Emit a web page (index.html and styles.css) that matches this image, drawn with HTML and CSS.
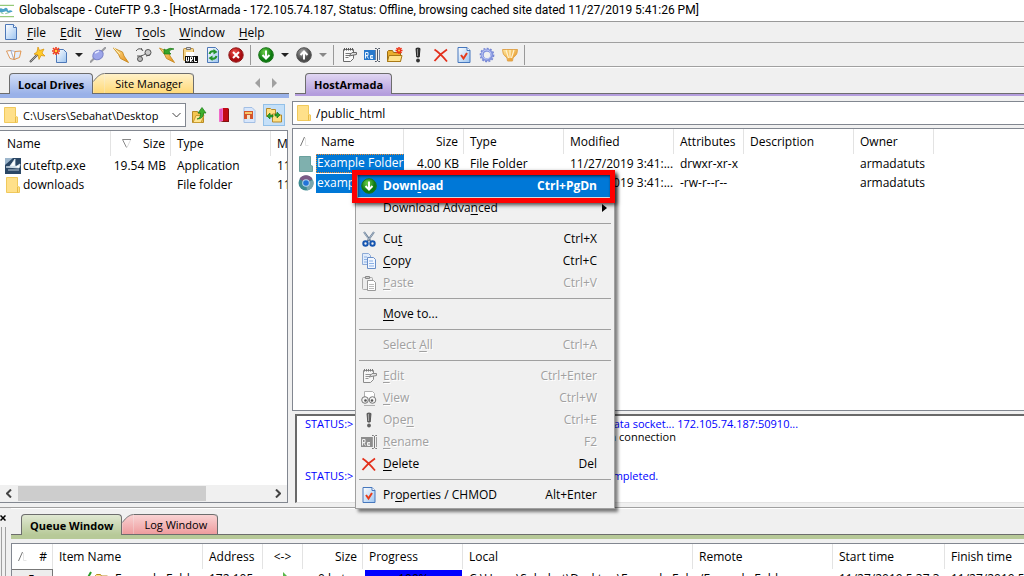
FILE: index.html
```html
<!DOCTYPE html>
<html lang="en">
<head>
<meta charset="utf-8">
<meta name="viewport" content="width=device-width, initial-scale=1">
<title>Globalscape - CuteFTP 9.3</title>
<link rel="stylesheet" href="styles.css">
</head>
<body>
<svg class="defs" width="0" height="0" aria-hidden="true">
  <defs>
    <linearGradient id="g-yellow" x1="0" y1="0" x2="0" y2="1"><stop offset="0" stop-color="#fff1c8"/><stop offset="1" stop-color="#ffd978"/></linearGradient>
    <linearGradient id="g-red" x1="0" y1="0" x2="0" y2="1"><stop offset="0" stop-color="#f9d3d3"/><stop offset="1" stop-color="#ee9c9e"/></linearGradient>
    <linearGradient id="g-page" x1="0" y1="0" x2="1" y2="1"><stop offset="0" stop-color="#ffffff"/><stop offset="1" stop-color="#9cc4f0"/></linearGradient>
    <radialGradient id="g-green" cx=".4" cy=".3"><stop offset="0" stop-color="#6fd04a"/><stop offset="1" stop-color="#0d7a10"/></radialGradient>
    <radialGradient id="g-grey" cx=".4" cy=".3"><stop offset="0" stop-color="#a8a8a8"/><stop offset="1" stop-color="#4c4c4c"/></radialGradient>
    <radialGradient id="g-stop" cx=".4" cy=".3"><stop offset="0" stop-color="#f0504a"/><stop offset="1" stop-color="#a80c10"/></radialGradient>
    <linearGradient id="g-gold" x1="0" y1="0" x2="1" y2="1"><stop offset="0" stop-color="#ffe9a0"/><stop offset="1" stop-color="#e58a12"/></linearGradient>
  </defs>
  <symbol id="i-app" viewBox="0 0 16 16"><path d="M0 1.500h16M0 14.500h16" stroke="#6bb544" stroke-width="1"/><path d="M0 5c3-1 3 2 5 0s4 0 4 2 2-1 5 1v1c-3 0-4 2-6 0s-4 2-8 0z" fill="#4ba3c7"/><path d="M1 10l3 1M6 11l4-1" stroke="#7cc08a"/></symbol>
  <symbol id="i-page" viewBox="0 0 16 16"><path d="M2.500.500h8l3 3v12h-11z" fill="url(#g-page)" stroke="#4d78b8"/><path d="M10.500.500v3h3" fill="#fff" stroke="#4d78b8"/></symbol>
  <symbol id="i-book" viewBox="0 0 16 16"><path d="M.500 4l4.500-.500 3 9-4-1z" fill="#f4f8ff" stroke="#d9904e" stroke-width=".900"/><path d="M5 3.500l4 1 1.500 7-2.500 1z" fill="#fff" stroke="#9ab0d8" stroke-width=".900"/><path d="M9 4.500l6-.500-1.500 6.500-5.500 2z" fill="#e4eefc" stroke="#e08b3b" stroke-width=".900"/></symbol>
  <symbol id="i-wand" viewBox="0 0 16 16"><path d="M1 15L9 7" stroke="#555" stroke-width="2.200"/><path d="M1.500 14.500L8 8" stroke="#bbb" stroke-width=".800"/><path d="M9 0l1.500 3.500L15 2l-2 4 3 3-4-.500-2 4-1-4.500-4-1 3-2z" fill="#ffca28" stroke="#d99006" stroke-width=".700"/></symbol>
  <symbol id="i-new" viewBox="0 0 16 16"><path d="M4.500 2.500h7l3 3v10h-10z" fill="url(#g-page)" stroke="#4d78b8"/><path d="M4 0v8M0 4h8M1 1l6 6M7 1L1 7" stroke="#ee3b1d" stroke-width="1.600"/><circle cx="4" cy="4" r="1.300" fill="#ffd23c"/></symbol>
  <symbol id="i-plug" viewBox="0 0 16 16"><path d="M0 15.500l5-5M11 5l5-5" stroke="#9a9b9f" stroke-width="2"/><ellipse cx="8" cy="8" rx="5.500" ry="4.500" transform="rotate(-35 8 8)" fill="#9da6ea" stroke="#7c84c8"/><path d="M5 6l4-2" stroke="#e6e9ff" stroke-width="1.500"/></symbol>
  <symbol id="i-bolt" viewBox="0 0 16 16"><path d="M.500 1l9 4 1.500 4 4.500 6.500-8-4-2-4z" fill="url(#g-gold)" stroke="#c78a20" stroke-width=".900"/><path d="M1 1l6 6" stroke="#fff0b0"/></symbol>
  <symbol id="i-unplug" viewBox="0 0 16 16"><path d="M0 4q3-4 6-1M5 9q6-2 5-5" fill="none" stroke="#555"/><circle cx="4" cy="12" r="2.500" fill="#bbb" stroke="#555"/><circle cx="12" cy="5.500" r="3" fill="#ccc" stroke="#555"/><path d="M1 9h5M10 9l4-1M5 1l2 3" stroke="#555"/></symbol>
  <symbol id="i-boltgreen" viewBox="0 0 16 16"><path d="M.500 1l9 4 1.500 4 4.500 6.500-8-4-2-4z" fill="url(#g-gold)" stroke="#c78a20" stroke-width=".900"/><path d="M5 7V2l2 1q4-3 8-1-4 0-5 3l2 2z" fill="#37a52a" stroke="#187a12" stroke-width=".700"/></symbol>
  <symbol id="i-url" viewBox="0 0 16 16"><rect x="1.500" y="1.500" width="10" height="12" rx="1" fill="#f5d488" stroke="#b88a36"/><path d="M4.500.500h4v2h-4z" fill="#ddd" stroke="#777"/><path d="M4 5h8v6H4z" fill="#fff"/><path d="M3 9h13v7H3z" fill="#111"/><path d="M4.500 10v4h2v-4M8.500 15v-5h2v2.500h-2l2 2.500M12.500 10v4.500H15" stroke="#fff" fill="none"/></symbol>
  <symbol id="i-refresh" viewBox="0 0 16 16"><path d="M2.500.500h8l3 3v12h-11z" fill="url(#g-page)" stroke="#4d78b8"/><path d="M4.500 7q1-3.500 5-2.500M11.500 9q-1 3.500-5 2.500" fill="none" stroke="#23942b" stroke-width="2"/><path d="M8.500 2l4 3-4 2.500zM7.500 14l-4-3 4-2.500z" fill="#23942b"/></symbol>
  <symbol id="i-stop" viewBox="0 0 16 16"><circle cx="8" cy="8" r="7.200" fill="url(#g-stop)" stroke="#8f1a1a"/><path d="M5 5l6 6M11 5l-6 6" stroke="#fff" stroke-width="2"/></symbol>
  <symbol id="i-down" viewBox="0 0 16 16"><circle cx="8" cy="8" r="7.300" fill="url(#g-green)" stroke="#1b741c"/><path d="M8 3.500v8M4.500 8L8 11.500 11.500 8" fill="none" stroke="#fff" stroke-width="2"/></symbol>
  <symbol id="i-up" viewBox="0 0 16 16"><circle cx="8" cy="8" r="7.300" fill="url(#g-grey)" stroke="#555"/><path d="M8 12.500v-8M4.500 8L8 4.500 11.500 8" fill="none" stroke="#fff" stroke-width="2"/></symbol>
  <symbol id="i-edit" viewBox="0 0 16 16"><path d="M2.500 2.500h10v9l-3 3h-7z" fill="#fafafa" stroke="#6a6a6a"/><path d="M3.500 1v2.500M5.500 1v2.500M7.500 1v2.500M9.500 1v2.500M11.500 1v2.500" stroke="#555"/><path d="M4.500 6.500h6M4.500 8.500h5M4.500 10.500h3" stroke="#777"/><path d="M8 9l3-3.500h4.500v2z" fill="#ddd" stroke="#666"/></symbol>
  <symbol id="i-rename" viewBox="0 0 16 16"><path d="M0 3h11v10H0z" fill="#2878cc"/><path d="M1.500 11.500v-6h2.500v3H1.500M2.500 8.500L4.500 11.500M9 8.500H6.500v3H9M6.500 10h2.500" fill="none" stroke="#e9f4ff"/><path d="M11 1.500h1.500l1 1 1-1H16M13.500 2v12M11 14.500h1.500l1-1 1 1H16" fill="none" stroke="#4e5663"/><path d="M11.500 3v10M15.500 3v10" stroke="#7382a0"/></symbol>
  <symbol id="i-newfolder" viewBox="0 0 16 16"><path d="M.500 14.500v-10l1-1h4l1 2h7v9z" fill="#e9ae2e" stroke="#9c6d11"/><path d="M.500 14.500l1.500-6h13l-1.500 6z" fill="#ffe28a" stroke="#a97917"/><path d="M12 0v7M8.500 3.500h7M9.500 1l5 5M14.500 1l-5 5" stroke="#ee3219" stroke-width="1.500"/><circle cx="12" cy="3.500" r="1" fill="#ffd23c"/></symbol>
  <symbol id="i-openfolder" viewBox="0 0 16 16"><path d="M1.500 13.500v-9l1-1h4l1 1.500h6v8.500z" fill="#ffe28a" stroke="#b98a22"/><path d="M1.500 13.500l3-6h10l-2 6z" fill="#fff0b5" stroke="#b98a22"/></symbol>
  <symbol id="i-bang" viewBox="0 0 16 16"><path d="M6 1.500q2-1 4 0L9.200 10H6.800z" fill="#333" stroke="#222"/><path d="M7.500 2v7" stroke="#8b8b8b"/><circle cx="8" cy="13.500" r="1.900" fill="#333"/></symbol>
  <symbol id="i-x" viewBox="0 0 16 16"><path d="M1.500 2.500q6 4 12.500 12M14 2.500Q7 7 1.500 14" fill="none" stroke="#e3301c" stroke-width="1.800"/></symbol>
  <symbol id="i-props" viewBox="0 0 16 16"><path d="M2 .500h9l3 3v12H2z" fill="url(#g-page)" stroke="#4677bd"/><path d="M11 .500v3h3" fill="#fff" stroke="#4677bd"/><path d="M5 8l2.500 3.500L11 6" fill="none" stroke="#e63c1c" stroke-width="2"/></symbol>
  <symbol id="i-gear" viewBox="0 0 16 16"><circle cx="8" cy="8" r="4.700" fill="none" stroke="#8595de" stroke-width="3"/><circle cx="8" cy="8" r="6.600" fill="none" stroke="#7687d4" stroke-width="1.500" stroke-dasharray="2 1.400"/><circle cx="7.500" cy="7.500" r="4.500" fill="none" stroke="#c0caf7"/></symbol>
  <symbol id="i-shell" viewBox="0 0 16 16"><path d="M.500 2.500h15q.500 5-4.500 8.500L10.500 14h-5L5 11Q0 7.500.500 2.500z" fill="url(#g-gold)" stroke="#e0a550"/><path d="M4 3l2.500 8M8 3v8M12 3l-2.500 8" stroke="#fff3d0" stroke-width="1.200"/></symbol>
  <symbol id="i-folder" viewBox="0 0 16 16"><path d="M1.500.500h11v9l2 .500v5.500h-13z" fill="#ffe08a" stroke="#f0c95c"/><path d="M12.500 10v5.500" stroke="#e8bb46"/></symbol>
  <symbol id="i-upfolder" viewBox="0 0 16 16"><path d="M1.500 15.500v-11h5l1 2h5v9z" fill="#f4c550" stroke="#b58a25"/><path d="M2 15.500l3-7h8l-3 7z" fill="#ffe592" stroke="#c99b2f"/><path d="M6 12q4-1 3.500-6H7l4-5.500L15 6h-2.500q0 6-6.500 6z" fill="#3eb02f" stroke="#187c17" stroke-width=".700"/></symbol>
  <symbol id="i-bookred" viewBox="0 0 16 16"><path d="M3 2l4-1v13l-4 1z" fill="#f06ac9"/><path d="M7 1h5v13H7z" fill="#c20a14"/><path d="M12 1l1 1v13H4l3-1h5z" fill="#801010"/><path d="M5 2v12" stroke="#d33fae"/></symbol>
  <symbol id="i-pic" viewBox="0 0 16 16"><path d="M3 .500h8l3 3v12H3z" fill="#d7e6fb" stroke="#a3bfe4"/><path d="M3 4h9v8H3z" fill="#d4542a"/><path d="M4 5h7v2H4z" fill="#f7c66a"/><path d="M6 8h3v4H6z" fill="#f3e2c8"/></symbol>
  <symbol id="i-sync" viewBox="0 0 16 16"><path d="M.500 9.500v-8h4l1 1h4v7z" fill="#ffe083" stroke="#b4892a"/><path d="M6.500 15v-8h4l1 1h4v7z" fill="#ffe083" stroke="#b4892a"/><path d="M1 9l3-3v2h3v2H4v2zM14 8l-3-3v2H9v2h2v2z" fill="#2da52c" stroke="#146c14" stroke-width=".600"/></symbol>
  <symbol id="i-exe" viewBox="0 0 16 16"><path d="M0 0h16v16H0z" fill="#2b4765"/><path d="M0 0h8L0 7z" fill="#9db6cc"/><path d="M10 1v7H5zM1 9l13 1q1-2 1-4-3 3-8 2.500zM3 12h11" fill="#fff" stroke="#dce8f2" stroke-width=".800"/></symbol>
  <symbol id="i-folderhot" viewBox="0 0 16 16"><path d="M1.500.500h11v9l2 .500v5.500h-13z" fill="#7fb0ae" stroke="#6aa09d"/></symbol>
  <symbol id="i-chrome" viewBox="0 0 16 16"><circle cx="8" cy="8" r="7.500" fill="#3c8b91"/><path d="M8 8L1.500 4A7.500 7.500 0 0 1 14.500 4z" fill="#7b5a86"/><path d="M8 8l7-3a7.500 7.500 0 0 1-6 10.500z" fill="#78a6ae"/><circle cx="8" cy="8" r="3.800" fill="#b3d6ee"/><circle cx="8" cy="8" r="2.800" fill="#2274d8"/></symbol>
  <symbol id="i-cut" viewBox="0 0 16 16"><path d="M3 1l6.500 9M13 1L6.500 10" stroke="#667b94" stroke-width="2"/><path d="M3 1l5 8M13 1L8 8" stroke="#c5d2df" stroke-width=".700"/><circle cx="4.500" cy="12.500" r="2.200" fill="none" stroke="#1655b0" stroke-width="2"/><circle cx="11.500" cy="12.500" r="2.200" fill="none" stroke="#1655b0" stroke-width="2"/></symbol>
  <symbol id="i-copy" viewBox="0 0 16 16"><path d="M1.500.500h6l2 2v9h-8z" fill="#e1ecfb" stroke="#8daad6"/><path d="M6.500 4.500h6l2 2v9h-8z" fill="#f2f7ff" stroke="#6a8fc8"/><path d="M8 8h4M8 10.500h5M8 13h5M3 4h3M3 6.500h3M3 9h3" stroke="#8bb0e5"/></symbol>
  <symbol id="i-paste" viewBox="0 0 16 16"><rect x="1.500" y="2.500" width="10" height="12" rx="1" fill="#ececec" stroke="#aaa"/><path d="M4.500 1.500h4v2h-4z" fill="#ccc" stroke="#888"/><path d="M6.500 5.500h6l2 2v8h-8z" fill="#fff" stroke="#999"/><path d="M8 9.500h5M8 11.500h5M8 13.500h5" stroke="#bbb"/></symbol>
  <symbol id="i-view" viewBox="0 0 16 16"><path d="M3.500 7V1.500h8l2 2V8M3 15.500h11" fill="#fff" stroke="#b0b0b0"/><circle cx="4" cy="10" r="3.300" fill="#f4f4f4" stroke="#777"/><circle cx="11.500" cy="10" r="3.300" fill="#f4f4f4" stroke="#777"/><circle cx="4.500" cy="10.500" r="1.300" fill="#555"/><circle cx="11" cy="10.500" r="1.300" fill="#555"/></symbol>
  <symbol id="i-sort" viewBox="0 0 9 9"><path d="M.500 9L4.500 0" stroke="#777"/><path d="M5.500 1v7.500h3" fill="none" stroke="#e6e6e6"/></symbol>
  <symbol id="i-sortdown" viewBox="0 0 9 9"><path d="M9 .500H.500L4.500 8.500" fill="none" stroke="#888"/><path d="M8.500 1L5 8.500" stroke="#ddd"/></symbol>
</svg>

<div class="app">
  <header class="titlebar"><svg class="ic"><use href="#i-app"/></svg><h1>Globalscape - CuteFTP 9.3 - [HostArmada - 172.105.74.187, Status: Offline, browsing cached site dated 11/27/2019 5:41:26 PM]</h1></header>

  <nav class="menubar" aria-label="Main menu">
    <svg class="ic"><use href="#i-page"/></svg>
    <button><u>F</u>ile</button><button><u>E</u>dit</button><button><u>V</u>iew</button><button>T<u>o</u>ols</button><button><u>W</u>indow</button><button><u>H</u>elp</button>
  </nav>

  <div class="toolbar" role="toolbar" aria-label="Tools">
    <button aria-label="Site manager"><svg class="ic"><use href="#i-book"/></svg></button>
    <button aria-label="Connection wizard"><svg class="ic"><use href="#i-wand"/></svg></button>
    <button aria-label="New"><svg class="ic"><use href="#i-new"/></svg></button>
    <button class="drop" aria-label="New options"></button>
    <button aria-label="Connect"><svg class="ic"><use href="#i-plug"/></svg></button>
    <button aria-label="Quick connect"><svg class="ic"><use href="#i-bolt"/></svg></button>
    <button aria-label="Disconnect"><svg class="ic"><use href="#i-unplug"/></svg></button>
    <button aria-label="Reconnect"><svg class="ic"><use href="#i-boltgreen"/></svg></button>
    <button aria-label="Paste URL"><svg class="ic"><use href="#i-url"/></svg></button>
    <button aria-label="Refresh"><svg class="ic"><use href="#i-refresh"/></svg></button>
    <button aria-label="Stop"><svg class="ic"><use href="#i-stop"/></svg></button>
    <span class="rule"></span>
    <button aria-label="Download"><svg class="ic"><use href="#i-down"/></svg></button>
    <button class="drop" aria-label="Download options"></button>
    <button aria-label="Upload"><svg class="ic"><use href="#i-up"/></svg></button>
    <button class="drop dim" aria-label="Upload options"></button>
    <span class="rule"></span>
    <button aria-label="Edit"><svg class="ic"><use href="#i-edit"/></svg></button>
    <button aria-label="Rename"><svg class="ic"><use href="#i-rename"/></svg></button>
    <button aria-label="New folder"><svg class="ic"><use href="#i-newfolder"/></svg></button>
    <button aria-label="Open"><svg class="ic"><use href="#i-bang"/></svg></button>
    <button aria-label="Delete"><svg class="ic"><use href="#i-x"/></svg></button>
    <button aria-label="Properties"><svg class="ic"><use href="#i-props"/></svg></button>
    <button aria-label="Options"><svg class="ic"><use href="#i-gear"/></svg></button>
    <button aria-label="Globalscape"><svg class="ic"><use href="#i-shell"/></svg></button>
    <span class="rule"></span>
  </div>

  <main class="workspace">
    <section class="local" aria-label="Local drives">
      <div class="tabs blue">
        <button class="tab on">Local Drives</button>
        <button class="tab off yellow"><svg class="slant" viewBox="0 0 12 21"><path d="M0 21V9Q6 .500 12 .500V21z" fill="url(#g-yellow)"/><path d="M0 9Q6 .500 12 .500" fill="none" stroke="#777"/></svg><span>Site Manager</span></button>
        <span class="scrollers"><button class="tri left" aria-label="Previous tab"></button><button class="tri right" aria-label="Next tab"></button></span>
      </div>
      <div class="address-row">
        <div class="address"><svg class="ic"><use href="#i-folder"/></svg><select aria-label="Local path"><option>C:\Users\Sebahat\Desktop</option></select><svg class="chev" viewBox="0 0 9 6"><path d="M.500 1l4 4 4-4" fill="none" stroke="#444"/></svg></div>
        <button class="tool" aria-label="Up one folder"><svg class="ic"><use href="#i-upfolder"/></svg></button>
        <button class="tool" aria-label="Bookmarks"><svg class="ic"><use href="#i-bookred"/></svg></button>
        <button class="tool" aria-label="Filter"><svg class="ic"><use href="#i-pic"/></svg></button>
        <button class="tool pressed" aria-label="Synchronized browsing"><svg class="ic"><use href="#i-sync"/></svg></button>
      </div>
      <div class="list">
        <table>
          <colgroup><col class="c111"><col class="c60"><col class="c100"><col></colgroup>
          <thead><tr><th>Name</th><th class="num"><svg class="sort"><use href="#i-sortdown"/></svg>Size</th><th>Type</th><th>Modified</th></tr></thead>
          <tbody>
            <tr><td class="name"><svg class="ic"><use href="#i-exe"/></svg>cuteftp.exe</td><td class="num">19.54 MB</td><td>Application</td><td>11/27/2019</td></tr>
            <tr><td class="name"><svg class="ic"><use href="#i-folder"/></svg>downloads</td><td></td><td>File folder</td><td>11/27/2019</td></tr>
          </tbody>
        </table>
        <div class="scrollbar"><button aria-label="Scroll left"><svg viewBox="0 0 6 9"><path d="M5 .500l-4 4 4 4" fill="none" stroke="#444" stroke-width="2"/></svg></button><span class="track"><span class="thumb"></span></span><button aria-label="Scroll right"><svg viewBox="0 0 6 9"><path d="M1 .500l4 4-4 4" fill="none" stroke="#444" stroke-width="2"/></svg></button></div>
      </div>
    </section>

    <section class="remote" aria-label="Remote site">
      <div class="tabs purple"><button class="tab on">HostArmada</button></div>
      <div class="address"><svg class="ic"><use href="#i-folder"/></svg><input type="text" aria-label="Remote path" value="/public_html"></div>
      <div class="list">
        <table>
          <colgroup><col class="c111"><col class="c60"><col class="c100"><col class="c110"><col class="c70"><col class="c110"><col class="c80"><col></colgroup>
          <thead><tr><th class="first"><svg class="sort"><use href="#i-sort"/></svg>Name</th><th class="num">Size</th><th>Type</th><th>Modified</th><th>Attributes</th><th>Description</th><th>Owner</th><th></th></tr></thead>
          <tbody>
            <tr><td class="name"><svg class="ic"><use href="#i-folderhot"/></svg><span class="sel focus">Example Folder</span></td><td class="num">4.00 KB</td><td>File Folder</td><td>11/27/2019 3:41:...</td><td>drwxr-xr-x</td><td></td><td>armadatuts</td><td></td></tr>
            <tr><td class="name"><svg class="ic"><use href="#i-chrome"/></svg><span class="sel">example.html</span></td><td></td><td></td><td>11/27/2019 3:41:...</td><td>-rw-r--r--</td><td></td><td>armadatuts</td><td></td></tr>
          </tbody>
        </table>
      </div>
      <div class="log">
        <p class="status"><span>STATUS:&gt;</span><span>Connecting FTP data socket... 172.105.74.187:50910...</span></p>
        <p><span></span><span>150 Opening data connection</span></p>
        <p></p>
        <p></p>
        <p class="status"><span>STATUS:&gt;</span><span>Remote listing completed.</span></p>
      </div>
    </section>
  </main>

  <section class="dock" aria-label="Transfers">
    <div class="grip"><button aria-label="Close"><svg viewBox="0 0 6 6"><path d="M.500.500l5 5M5.500.500l-5 5" stroke="#000" stroke-width="1.500"/></svg></button><span class="bars"></span></div>
    <div class="dock-body">
      <div class="tabs green">
        <button class="tab on">Queue Window</button>
        <button class="tab off red"><svg class="slant" viewBox="0 0 12 21"><path d="M0 21V9Q6 .500 12 .500V21z" fill="url(#g-red)"/><path d="M0 9Q6 .500 12 .500" fill="none" stroke="#777"/></svg><span>Log Window</span></button>
      </div>
      <div class="queue">
        <table>
          <colgroup><col class="c41"><col class="c150"><col class="c60"><col class="c40"><col class="c60"><col class="c100"><col class="c230"><col class="c140"><col class="c112"><col></colgroup>
          <thead><tr><th class="num"><svg class="sort"><use href="#i-sort"/></svg>#</th><th>Item Name</th><th>Address</th><th class="mid">&lt;-&gt;</th><th class="num">Size</th><th>Progress</th><th>Local</th><th>Remote</th><th>Start time</th><th>Finish time</th></tr></thead>
          <tbody><tr><td class="index">5</td><td class="item"><svg class="ic"><path d="M4 8l3 4 6-11" fill="none" stroke="#2a9d2a" stroke-width="2"/></svg><svg class="ic"><use href="#i-openfolder"/></svg>Example Folder</td><td>172.105....</td><td class="mid"><svg class="ic"><path d="M1 5h7V1l6 6-6 6V9H1z" fill="#58b84a"/></svg></td><td class="num">0 bytes</td><td class="bar"><span>100%</span></td><td>C:\Users\Sebahat\Desktop\Example Fol...</td><td>/Example Folder</td><td>11/27/2019 5:37:3...</td><td>11/27/2019 5:37:3...</td></tr></tbody>
        </table>
      </div>
    </div>
  </section>

  <div class="menu" role="menu">
    <button role="menuitem" class="hot"><svg class="ic"><use href="#i-down"/></svg><span>Down<u>l</u>oad</span><kbd>Ctrl+PgDn</kbd></button>
    <button role="menuitem"><i class="ic"></i><span>Download Adva<u>n</u>ced</span><i class="more"></i></button>
    <hr>
    <button role="menuitem"><svg class="ic"><use href="#i-cut"/></svg><span>Cu<u>t</u></span><kbd>Ctrl+X</kbd></button>
    <button role="menuitem"><svg class="ic"><use href="#i-copy"/></svg><span><u>C</u>opy</span><kbd>Ctrl+C</kbd></button>
    <button role="menuitem" disabled><svg class="ic"><use href="#i-paste"/></svg><span><u>P</u>aste</span><kbd>Ctrl+V</kbd></button>
    <hr>
    <button role="menuitem"><i class="ic"></i><span><u>M</u>ove to...</span></button>
    <hr>
    <button role="menuitem" disabled><i class="ic"></i><span>Select <u>A</u>ll</span><kbd>Ctrl+A</kbd></button>
    <hr>
    <button role="menuitem" disabled><svg class="ic grey"><use href="#i-edit"/></svg><span><u>E</u>dit</span><kbd>Ctrl+Enter</kbd></button>
    <button role="menuitem" disabled><svg class="ic"><use href="#i-view"/></svg><span><u>V</u>iew</span><kbd>Ctrl+W</kbd></button>
    <button role="menuitem" disabled><svg class="ic grey"><use href="#i-bang"/></svg><span>Ope<u>n</u></span><kbd>Ctrl+E</kbd></button>
    <button role="menuitem" disabled><svg class="ic grey"><use href="#i-rename"/></svg><span><u>R</u>ename</span><kbd>F2</kbd></button>
    <button role="menuitem"><svg class="ic"><use href="#i-x"/></svg><span><u>D</u>elete</span><kbd>Del</kbd></button>
    <hr>
    <button role="menuitem"><svg class="ic"><use href="#i-props"/></svg><span>Pr<u>o</u>perties / CHMOD</span><kbd>Alt+Enter</kbd></button>
    <div class="callout"></div>
  </div>
</div>
</body>
</html>
```

FILE: styles.css
```css
* { box-sizing: border-box; }
body {
  margin: 0;
  overflow: hidden;
  background: #f0f0f0;
  color: #000;
  font: 12px/19px "Open Sans", "Noto Sans", sans-serif;
}
button, input, select, kbd { font: inherit; color: inherit; }
button { padding: 0; border: 0; background: none; }
u { text-underline-offset: 2px; }
.defs { position: absolute; }
.ic { display: block; flex: none; width: 16px; height: 16px; }
.app { position: relative; display: flex; flex-direction: column; height: 100vh; }

.titlebar { display: flex; align-items: center; gap: 5px; height: 21px; background: #fff; white-space: nowrap; }
.titlebar .ic { width: 14px; }
.titlebar h1 { margin: 0; font: 400 12px/19px Roboto, sans-serif; }

.menubar { display: flex; align-items: center; height: 22px; padding-left: 3px; border-top: 1px solid #999; border-bottom: 1px solid #a0a0a0; }
.menubar .ic { margin-right: 1px; }
.menubar button { padding: 0 7px; }

.toolbar { display: flex; align-items: center; height: 24px; padding-left: 2px; border-bottom: 1px solid #a0a0a0; }
.toolbar button { display: grid; place-items: center; width: 23px; height: 22px; }
.toolbar .drop { width: 15px; }
.drop::before { content: ""; border: 4px solid transparent; border-top-color: #222; border-bottom: 0; }
.drop.dim::before { border-top-color: #888; }
.rule { width: 1px; height: 20px; margin: 0 3px; background: #999; }

.workspace { display: flex; flex: 1; gap: 3px; min-height: 0; border-top: 1px solid #fff; }
.local, .remote { display: flex; flex-direction: column; min-width: 0; }
.local { flex: 0 0 289px; }
.remote { flex: 1; }

.tabs { display: flex; align-items: flex-end; flex: none; height: 30px; padding-left: 9px; border-bottom: 4px solid #99b1e8; background: linear-gradient(#6d6d6d, #6d6d6d) bottom / 100% 1px no-repeat; font-size: 11px; }
.tab { height: 21px; border: 1px solid #6d6d6d; border-bottom: 0; border-radius: 4px 4px 0 0; white-space: nowrap; }
.tab.on { padding: 0 8px; font-weight: 700; }
.tab.off { display: flex; border-left: 0; border-bottom: 1px solid #6d6d6d; border-top: 0; }
.tab.off span { padding: 0 10px; border-top: 1px solid #6d6d6d; border-radius: 0 4px 0 0; }
.slant { width: 12px; height: 20px; }
.blue .on { background: linear-gradient(#d3def7, #99b1e8); }
.yellow span { background: linear-gradient(#fff1c8, #ffd978); }
.purple { height: 28px; margin-left: 3px; padding-left: 10px; border-color: #b49ddd; border-bottom-width: 2px; }
.purple .on { background: linear-gradient(#e0d6f2, #b49ddd); }
.green { padding-left: 10px; border-color: #b7c998; }
.green .on { background: linear-gradient(#e0e8d2, #b7c998); }
.red span { background: linear-gradient(#f9d3d3, #ee9c9e); }
.scrollers { display: flex; gap: 12px; margin: 0 12px 6px auto; }
.tri { border: 5px solid transparent; }
.tri.left { border-right-color: #a0a0a0; border-left: 0; }
.tri.right { border-left-color: #a0a0a0; border-right: 0; }

.address-row { display: flex; align-items: center; margin-top: 5px; }
.address { display: flex; align-items: center; flex: none; height: 24px; border: 1px solid #828790; background: #fff; }
.address-row .address { flex: 0 0 186px; padding-right: 4px; border-left: 0; font-size: 11px; }
.address .ic { margin: 0 4px 0 3px; }
.address select, .address input { flex: 1; min-width: 0; height: 20px; padding: 0; border: 0; background: none; appearance: none; outline: 0; }
.chev { width: 9px; height: 6px; }
.tool { display: grid; place-items: center; width: 25px; height: 22px; }
.pressed { width: 22px; margin-left: 2px; border: 1px solid #92c0e8; background: #c5e0f8; }
.remote > .address { margin-top: 5px; border-right: 0; }

.list { display: flex; flex: 1; flex-direction: column; min-height: 0; margin-top: 3px; overflow: hidden; border: 1px solid #828790; background: #fff; }
.local .list { margin-right: 1px; margin-bottom: 4px; border-left: 0; }
.remote .list { border-right: 0; }
table { width: 100%; border-collapse: separate; border-spacing: 0; table-layout: fixed; }
th { height: 25px; padding: 0 6px; border-right: 1px solid #e3e3e3; font-weight: 400; text-align: left; }
td { height: 19px; padding: 0 7px 0 6px; line-height: 17px; }
th, td { overflow: hidden; white-space: nowrap; }
th:last-child { border-right: 0; }
.local th:first-child { padding-left: 7px; }
.num { padding-left: 0; padding-right: 5px; text-align: right; }
.mid { text-align: center; }
.sort { width: 9px; height: 9px; margin-right: 12px; }
.first { padding-left: 7px; }
.name { padding: 0 0 0 5px; }
.name .ic { display: inline-block; margin-right: 2px; vertical-align: middle; }
.sel { display: inline-block; height: 19px; padding: 0 4px 0 1px; background: #0078d7; color: #fff; vertical-align: middle; }
.focus { outline: 1px dotted #f08a2a; outline-offset: -1px; }
.c40 { width: 40px; }
.c41 { width: 41px; }
.c60 { width: 60px; }
.c70 { width: 70px; }
.c80 { width: 80px; }
.c100 { width: 100px; }
.c110 { width: 110px; }
.c111 { width: 111px; }
.c112 { width: 112px; }
.c140 { width: 140px; }
.c150 { width: 150px; }
.c230 { width: 230px; }

.scrollbar { display: flex; align-items: center; height: 17px; margin-top: auto; background: #f0f0f0; }
.scrollbar button { display: grid; place-items: center; width: 18px; }
.scrollbar svg { width: 6px; height: 9px; }
.track { flex: 1; height: 15px; }
.thumb { display: block; width: 75%; height: 100%; background: #cdcdcd; }

.log { flex: 0 0 89px; margin: 3px 0 4px 3px; padding: 1px 8px; overflow: hidden; border: 2px solid #696969; border-right: 0; border-bottom: 1px solid #e3e3e3; background: #fff; font-size: 11px; line-height: 13px; }
.log p { display: grid; grid-template-columns: 220px 1fr; height: 13px; margin: 0; white-space: nowrap; }
.status { color: #00f; }

.dock { display: flex; flex: 0 0 69px; overflow: hidden; border-top: 1px solid #a0a0a0; }
.grip { display: flex; flex: 0 0 11px; flex-direction: column; gap: 6px; padding-top: 7px; }
.grip button { width: 6px; height: 6px; }
.grip svg { display: block; width: 6px; height: 6px; }
.bars { flex: 1; width: 5px; margin-left: 1px; border: 1px solid #a0a0a0; border-width: 0 1px; }
.dock-body { flex: 1; min-width: 0; border-top: 1px solid #fff; }
.queue { height: 60px; margin-top: 4px; overflow: hidden; border: 1px solid #828790; border-right: 0; background: #fff; }
.queue .index { border: 1px solid #777; border-width: 1px 1px 0 0; background: #ededed; text-align: center; }
.item .ic { display: inline-block; margin-left: 19px; vertical-align: middle; }
.item .ic:nth-child(2) { margin: 0 5px 0 0; }
.queue .mid .ic { display: inline-block; vertical-align: middle; }
.queue .bar { padding: 1px 1px 0 2px; }
.bar span { display: block; height: 18px; background: #00f; text-align: center; }

.menu { position: absolute; top: 172px; left: 355px; width: 260px; padding: 2px; border: 1px solid #a0a0a0; background: #f0f0f0; box-shadow: 3px 3px 3px rgba(0, 0, 0, .5); }
.menu button { display: flex; align-items: center; width: 100%; height: 22px; padding: 0 15px 0 3px; text-align: left; }
.menu .ic { margin-right: 6px; }
.menu span { flex: 1; }
.menu span, .menu kbd { padding-bottom: 2px; }
.menu hr { height: 1px; margin: 4px 1px; border: 0; background: #a0a0a0; }
.menu button:disabled { color: #a0a0a0; text-shadow: 1px 1px #fff; }
.menu .hot { background: #0078d7; color: #fff; font-weight: 700; }
.grey { filter: grayscale(1); opacity: .75; }
.more { margin-right: -10px; border: 4px solid transparent; border-left: 5px solid #000; border-right: 0; }
.callout { position: absolute; top: -3px; left: -4px; right: -1px; height: 33px; border: 5px solid #f00; box-shadow: 2px 2px 4px rgba(0, 0, 0, .7), inset 1px 1px 3px rgba(0, 0, 0, .7); }
```
